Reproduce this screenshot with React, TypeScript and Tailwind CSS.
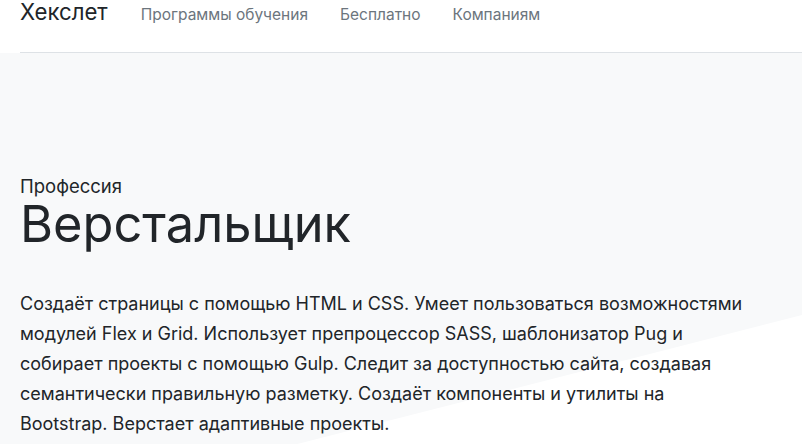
import React from "react";

export default function App() {
  return (
    <div className="w-[802px] h-[444px] overflow-hidden bg-white text-[#212529] font-['Inter',sans-serif]">
      <header className="pl-5">
        <div className="h-[53px] border-b border-[#dee2e6] flex items-baseline">
          <a className="text-[22.2px] leading-[24px] text-[#212529] mr-[17px]">Хекслет</a>
          <nav className="flex items-baseline">
            <a className="px-4 text-[15.5px] text-[#6c757d]">Программы обучения</a>
            <a className="px-4 text-[15.5px] text-[#6c757d]">Бесплатно</a>
            <a className="px-4 text-[15.5px] text-[#6c757d]">Компаниям</a>
          </nav>
        </div>
      </header>
      <section className="relative h-[487px] pt-[121px] px-5">
        <div className="absolute inset-0 bg-[#f8f9fa] [clip-path:polygon(0_0,100%_0,100%_262px,0_467px)]" />
        <div className="relative">
          <div className="text-[18.5px] leading-6">Профессия</div>
          <h1 className="mt-px text-[50.5px] leading-none font-normal">Верстальщик</h1>
          <p className="mt-[39px] text-[18px] leading-[30px]">
            Создаёт страницы с помощью HTML и CSS. Умеет пользоваться возможностями
            <br />
            модулей Flex и Grid. Использует препроцессор SASS, шаблонизатор Pug и
            <br />
            собирает проекты с помощью Gulp. Следит за доступностью сайта, создавая
            <br />
            семантически правильную разметку. Создаёт компоненты и утилиты на
            <br />
            Bootstrap. Верстает адаптивные проекты.
          </p>
        </div>
      </section>
    </div>
  );
}
